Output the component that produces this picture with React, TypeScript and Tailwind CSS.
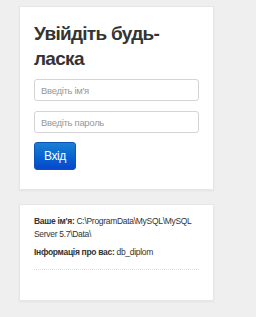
export default function App() {
  return (
    <div
      className="min-h-[317px] w-[256px] bg-[#efefef] pt-[6px] pl-[19px]"
      style={{ fontFamily: '"Liberation Sans", Arial, sans-serif' }}
    >
      <div className="flex w-[195px] flex-col border border-[#e6e6e6] bg-white px-[14px] pt-[14px] pb-[19px] shadow-[0_1px_2px_rgba(0,0,0,0.05)]">
        <h2 className="text-[19px] font-bold leading-[25px] tracking-[-0.7px] text-[#333333]">Увійдіть будь-ласка</h2>
        <input
          type="text"
          placeholder="Введіть ім'я"
          className="mt-[8px] h-[22px] w-[165px] rounded-[3px] border border-[#d4d4d4] px-[6px] text-[9.5px] tracking-[-0.3px] text-[#555] placeholder:text-[#999]"
        />
        <input
          type="password"
          placeholder="Введіть пароль"
          className="mt-[10px] h-[22px] w-[165px] rounded-[3px] border border-[#d4d4d4] px-[6px] text-[9.5px] tracking-[-0.3px] text-[#555] placeholder:text-[#999]"
        />
        <button className="mt-[9px] h-[28px] w-[42px] rounded-[3px] border border-[#0b54b8] bg-gradient-to-b from-[#1b7fd4] to-[#0847cc] text-[12px] tracking-[-0.4px] text-white">
          Вхід
        </button>
      </div>
      <div className="mt-[14px] flex h-[97px] w-[195px] flex-col border border-[#e6e6e6] bg-white px-[14px] pt-[10px] shadow-[0_1px_2px_rgba(0,0,0,0.05)]">
        <div className="text-[8.5px] leading-[13px] tracking-[-0.3px] text-[#333]">
          <p className="flex gap-[2px]">
            <span className="font-bold">Ваше ім'я:</span>
            <span>C:\ProgramData\MySQL\MySQL</span>
          </p>
          <p>Server 5.7\Data\</p>
        </div>
        <p className="mt-[5px] flex gap-[2px] text-[8.5px] leading-[13px] tracking-[-0.3px] text-[#333]">
          <span className="font-bold">Інформація про вас:</span>
          <span>db_diplom</span>
        </p>
        <div className="mt-[10px] w-[165px] border-t border-dotted border-[#dddddd]" />
      </div>
    </div>
  );
}
